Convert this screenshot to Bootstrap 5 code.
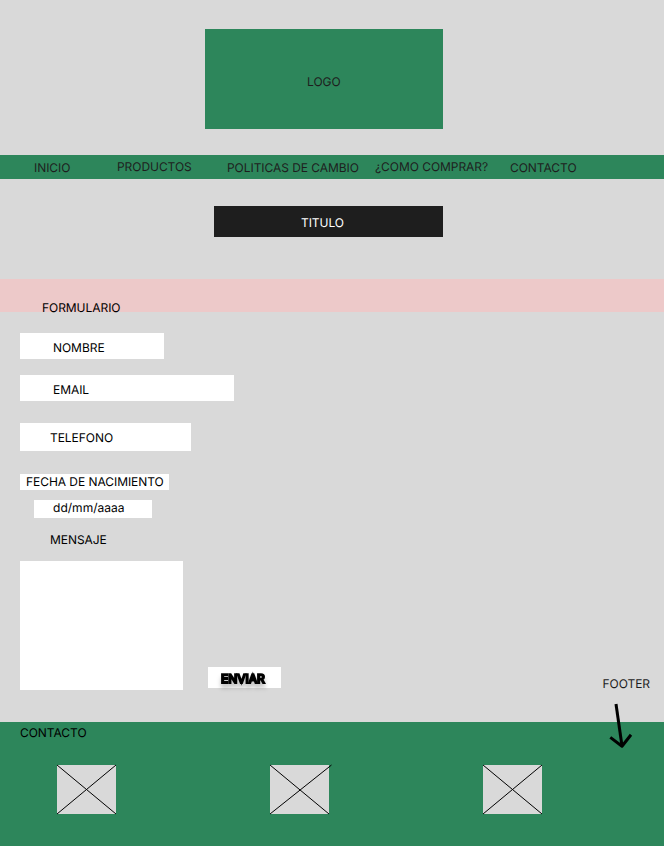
<!DOCTYPE html>
<html lang="es">
<head>
<meta charset="utf-8">
<meta name="viewport" content="width=device-width, initial-scale=1">
<title>Contacto</title>
<link href="https://cdn.jsdelivr.net/npm/bootstrap@5.3.0/dist/css/bootstrap.min.css" rel="stylesheet">
<style>
  body { font-family: Inter, sans-serif; font-size: 12px; line-height: 15px; letter-spacing: -.05px; text-rendering: geometricPrecision; background: #d9d9d9; color: #000; width: 664px; height: 846px; overflow: hidden; }
  .green { background: #2d865b; }
  .ink { color: #1e1e1e; }
  .brand-box { width: 238px; height: 100px; margin: 29px 0 0 205px; padding: 45px 0 0 102px; }
  .main-nav { height: 24px; margin-top: 26px; padding: 4px 0 0 34px; }
  .main-nav .nav-link { padding: 0; color: #1e1e1e; white-space: nowrap; }
  .main-nav .low { padding-top: 1px; }
  .w-inicio { width: 83px; } .w-productos { width: 110px; } .w-politicas { width: 148px; } .w-comprar { width: 135px; }
  .title-box { width: 229px; height: 31px; margin: 27px 0 0 214px; padding: 9px 0 0 87px; background: #1e1e1e; font-size: 12px; line-height: 15px; font-weight: 400; }
  .band { height: 33px; margin-top: 42px; padding: 21px 0 0 42px; background: #edc9c9; font-size: 12px; line-height: 15px; font-weight: 400; }
  .contact-form { padding: 21px 14px 0 20px; height: 410px; }
  .contact-form .form-control { border: 0; border-radius: 0; font-size: 12px; line-height: 15px; letter-spacing: -.05px; min-height: 0; background: #fff; color: #000; box-shadow: none; resize: none; text-rendering: geometricPrecision; }
  .contact-form .form-control::placeholder { color: #000; opacity: 1; }
  .f-nombre { width: 144px; height: 26px; padding: 7px 0 4px 33px; }
  .f-email { width: 214px; height: 26px; margin-top: 16px; padding: 7px 0 4px 33px; }
  .f-tel { width: 171px; height: 28px; margin-top: 22px; padding: 7px 0 6px 30px; }
  .l-fecha { width: 149px; height: 16px; margin-top: 23px; padding-left: 6px; white-space: nowrap; }
  .contact-form .f-fecha { width: 118px; height: 18px; margin: 10px 0 0 14px; padding: 0 0 3px 19px; letter-spacing: .03px; }
  .l-mensaje { margin: 14px 0 0 30px; }
  .f-mensaje { width: 163px; height: 129px; }
  .form-end { margin-top: 14px; height: 129px; }
  .send { width: 73px; height: 21px; margin: 106px 0 0 25px; padding: 2px 0 0 13px; border: 0; border-radius: 0; background: #fff; color: #000; font-size: 12px; line-height: 15px; text-align: left; text-rendering: geometricPrecision; }
  .send:hover { background: #fff; color: #000; }
  .send span { display: block; -webkit-text-stroke: 2px #000; filter: drop-shadow(0 4px 2px rgba(0,0,0,.25)); }
  .note { margin-top: 115px; }
  .arrow { position: absolute; left: 604px; top: 700px; }
  .page-foot { height: 124px; padding: 3px 0 0 20px; }
  .pics { margin: 25px 0 0 36px; gap: 153px; }
  .pics svg { display: block; overflow: visible; }
</style>
<script src="https://cdn.jsdelivr.net/npm/bootstrap@5.3.0/dist/js/bootstrap.bundle.min.js"></script>
</head>
<body class="position-relative d-flex flex-column">
<header>
  <div class="brand-box green ink">LOGO</div>
  <nav class="main-nav green nav flex-nowrap">
    <a class="nav-link low w-inicio" href="#">INICIO</a>
    <a class="nav-link w-productos" href="#">PRODUCTOS</a>
    <a class="nav-link low w-politicas" href="#">POLITICAS DE CAMBIO</a>
    <a class="nav-link w-comprar" href="#">¿COMO COMPRAR?</a>
    <a class="nav-link low" href="#">CONTACTO</a>
  </nav>
</header>
<main>
  <h1 class="title-box text-white mb-0">TITULO</h1>
  <h2 class="band mb-0">FORMULARIO</h2>
  <form class="contact-form d-flex flex-column align-items-start">
    <input class="form-control f-nombre" type="text" placeholder="NOMBRE" aria-label="Nombre">
    <input class="form-control f-email" type="email" placeholder="EMAIL" aria-label="Email">
    <input class="form-control f-tel" type="tel" placeholder="TELEFONO" aria-label="Teléfono">
    <label class="l-fecha bg-white" for="fecha">FECHA DE NACIMIENTO</label>
    <input class="form-control f-fecha" id="fecha" type="text" placeholder="dd/mm/aaaa">
    <label class="l-mensaje" for="mensaje">MENSAJE</label>
    <div class="form-end d-flex align-items-start w-100">
      <textarea class="form-control f-mensaje p-0" id="mensaje"></textarea>
      <button class="btn send" type="button"><span>ENVIAR</span></button>
      <div class="note ink ms-auto">FOOTER</div>
    </div>
  </form>
</main>
<footer class="page-foot green">
  <div>CONTACTO</div>
  <div class="pics d-flex">
    <svg width="60" height="49" fill="none" stroke="#000"><path fill="#d9d9d9" stroke="none" d="M1 0h59v49H1z"/><path d="M1 0l59 49M1 49L60 0"/></svg>
    <svg width="60" height="49" fill="none" stroke="#000"><path fill="#d9d9d9" stroke="none" d="M1 0h59v49H1z"/><path d="M1 0l59 49M1 49L62.500 0"/></svg>
    <svg width="60" height="49" fill="none" stroke="#000"><path fill="#d9d9d9" stroke="none" d="M1 0h59v49H1z"/><path d="M1 0l59 49M1 49L60 0"/></svg>
  </div>
</footer>
<svg class="arrow" width="32" height="50" fill="none" stroke="#000" stroke-width="3"><path d="M12 4L18 46"/><path stroke-linejoin="round" d="M6.300 37.400L18 46.200L27 34.800"/></svg>
</body>
</html>
